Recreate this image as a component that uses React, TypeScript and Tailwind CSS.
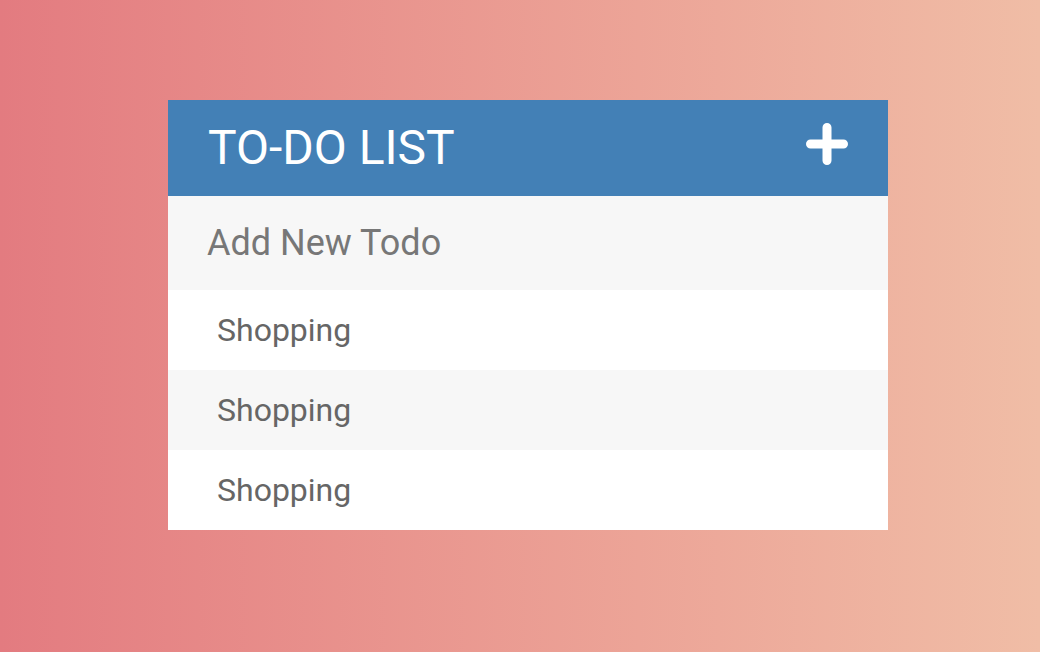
import { useState } from 'react'

export default function App() {
  const [todos] = useState(['Shopping', 'Shopping', 'Shopping'])
  const [text, setText] = useState('')

  return (
    <div
      className="w-[1040px] h-[652px] bg-gradient-to-r from-[#e37b80] to-[#f0bda6] flex pl-[168px] pt-[100px]"
      style={{ fontFamily: 'Roboto, "Liberation Sans", sans-serif' }}
    >
      <div className="w-[720px] h-[430px] bg-white flex flex-col">
        <div className="h-[96px] bg-[#4380b6] flex items-center justify-between pl-[40px] pr-[40px]">
          <h1 className="text-[48px] leading-none text-white font-normal">TO-DO LIST</h1>
          <svg width="42" height="42" viewBox="0 0 42 42" className="-mt-[8px]">
            <path d="M21 4.5v33M4.5 21h33" stroke="white" strokeWidth="9" strokeLinecap="round" />
          </svg>
        </div>
        <input
          value={text}
          onChange={(e) => setText(e.target.value)}
          placeholder="Add New Todo"
          className="h-[94px] w-full bg-[#f7f7f7] pl-[39px] pr-[40px] text-[36px] text-[#555] placeholder-[#777] outline-none"
        />
        <ul>
          {todos.map((t, i) => (
            <li
              key={i}
              className={`h-[80px] flex items-center pl-[49px] text-[32px] text-[#666] ${i % 2 === 1 ? 'bg-[#f7f7f7]' : 'bg-white'}`}
            >
              {t}
            </li>
          ))}
        </ul>
      </div>
    </div>
  )
}
